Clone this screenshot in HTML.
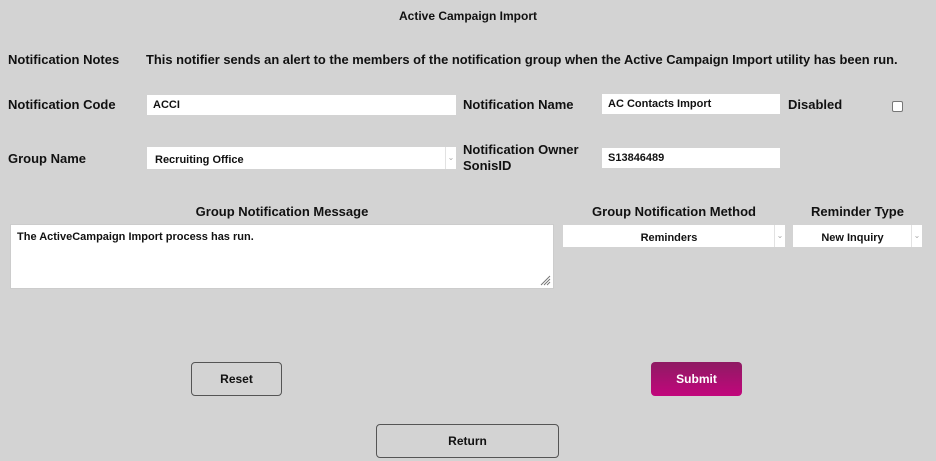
<!DOCTYPE html>
<html><head><style>
body{margin:0;width:936px;height:461px;background:#d3d3d3;font-family:"Liberation Sans",sans-serif;font-weight:bold;color:#111;position:relative;overflow:hidden}
.a{position:absolute;white-space:nowrap}
.l{font-size:13px}
.in{position:absolute;background:#fff;font-size:11px;box-sizing:border-box;padding-left:6px;line-height:20px}
.sel{position:absolute;background:#fff;font-size:11px;box-sizing:border-box;line-height:26px}
.sel .ar{position:absolute;right:0;top:0;bottom:0;width:10px;border-left:1px solid #e2e2e2;color:#aaa;font-size:8px;line-height:22px;text-align:center;font-weight:normal}
.btn{position:absolute;box-sizing:border-box;border:1px solid #555;border-radius:4px;font-size:12px;text-align:center}
</style></head><body>
<div class="a" style="left:0;width:936px;text-align:center;top:9px;font-size:12px">Active Campaign Import</div>
<div class="a l" style="left:8px;top:52px">Notification Notes</div>
<div class="a" style="left:146px;top:52px;font-size:12.9px">This notifier sends an alert to the members of the notification group when the Active Campaign Import utility has been run.</div>

<div class="a l" style="left:8px;top:97px">Notification Code</div>
<div class="in" style="left:147px;top:95px;width:309px;height:20px">ACCI</div>
<div class="a l" style="left:463px;top:97px">Notification Name</div>
<div class="in" style="left:602px;top:94px;width:178px;height:20px">AC Contacts Import</div>
<div class="a l" style="left:788px;top:97px">Disabled</div>
<div class="a" style="left:892px;top:101px;width:9px;height:9px;background:#fff;border:1px solid #777;border-radius:2px"></div>

<div class="a l" style="left:8px;top:151px">Group Name</div>
<div class="sel" style="left:147px;top:147px;width:309px;height:22px;padding-left:8px">Recruiting Office<span class="ar">&#8964;</span></div>
<div class="a l" style="left:463px;top:142px;line-height:16px">Notification Owner<br>SonisID</div>
<div class="in" style="left:602px;top:148px;width:178px;height:20px">S13846489</div>

<div class="a l" style="left:10px;width:544px;text-align:center;top:204px">Group Notification Message</div>
<div class="a" style="left:10px;top:224px;width:544px;height:65px;background:#fff;border:1px solid #ccc;box-sizing:border-box;font-size:11px;padding:6px 6px">The ActiveCampaign Import process has run.
<svg style="position:absolute;right:2px;bottom:2px" width="11" height="11"><path d="M10 1L1 10M10 4L4 10M10 7L7 10" stroke="#777" stroke-width="1"/></svg></div>
<div class="a l" style="left:563px;width:222px;text-align:center;top:204px">Group Notification Method</div>
<div class="sel" style="left:563px;top:225px;width:222px;height:22px;text-align:center;padding-right:10px">Reminders<span class="ar">&#8964;</span></div>
<div class="a l" style="left:793px;width:129px;text-align:center;top:204px">Reminder Type</div>
<div class="sel" style="left:793px;top:225px;width:129px;height:22px;text-align:center;padding-right:10px">New Inquiry<span class="ar">&#8964;</span></div>

<div class="btn" style="left:191px;top:362px;width:91px;height:34px;line-height:32px">Reset</div>
<div class="btn" style="left:651px;top:362px;width:91px;height:34px;line-height:34px;border:none;background:linear-gradient(#8e1b63,#c2067c);color:#fff">Submit</div>
<div class="btn" style="left:376px;top:424px;width:183px;height:34px;line-height:32px">Return</div>
</body></html>
